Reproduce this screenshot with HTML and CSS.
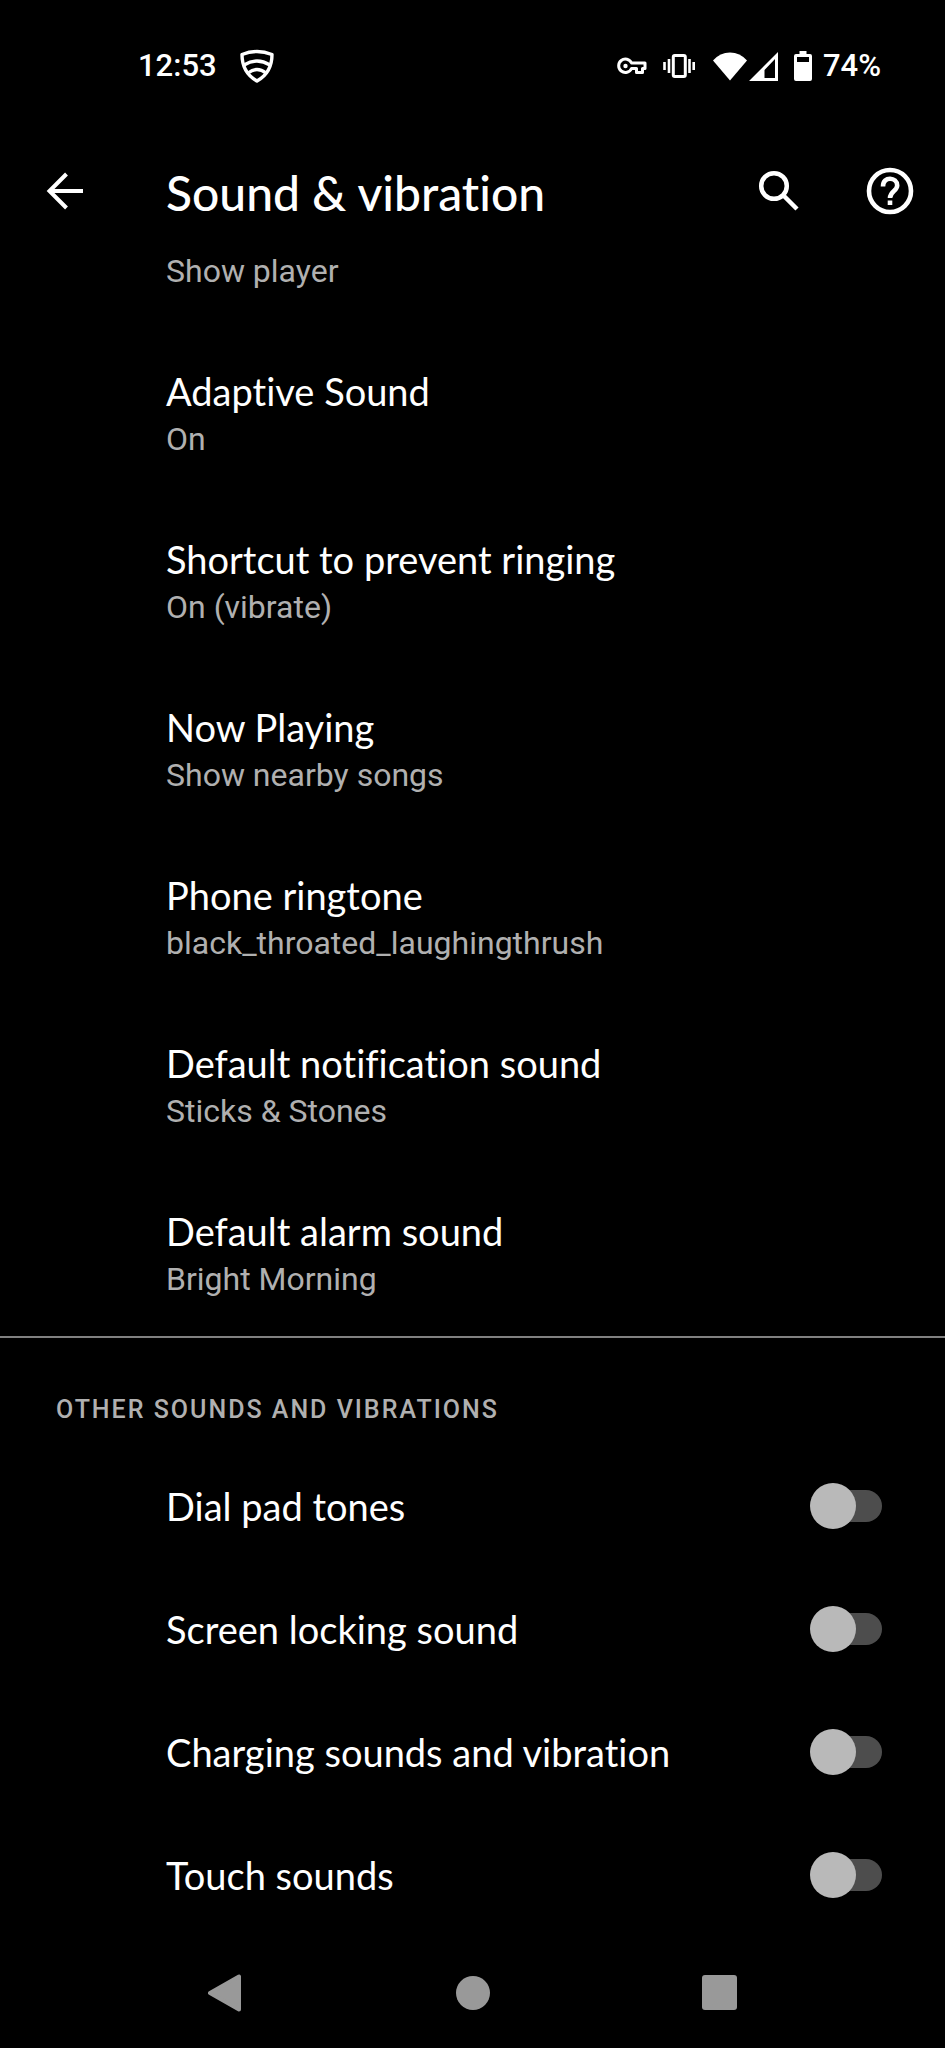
FILE: index.html
```
<!DOCTYPE html>
<html lang="en">
<head>
    <meta charset="UTF-8">
    <meta name="viewport" content="width=device-width, initial-scale=1.0">
    <title>Sound &amp; vibration</title>
    <link rel="stylesheet" href="styles.css">
</head>
<body>
    <div class="status-bar">
        <span class="clock">12:53</span>
        <svg class="shield" width="34" height="34" viewBox="0 0 34 34" fill="none" stroke="currentColor" stroke-width="3.400" stroke-linejoin="round">
            <path d="M2 5.500Q17 -.5 32 5.500C32 18 26 27 17 32C8 27 2 18 2 5.500Z"/>
            <path d="M4 16Q17 8 30 16M8 24Q17 17 26 24"/>
        </svg>
        <div class="status-icons">
            <svg class="key" width="30" height="18" viewBox="0 0 30 18" fill="none" stroke="currentColor" stroke-width="3">
                <path d="M14.500 6H28V11.500H25.500V15.500H19.500V11.500H14.500A6.700 6.700 0 1 1 14.500 6Z" stroke-linejoin="round"/>
                <circle cx="8.500" cy="9" r="2.200" fill="currentColor" stroke="none"/>
            </svg>
            <svg class="vibrate" width="32" height="24" viewBox="0 0 32 24" fill="none" stroke="currentColor" stroke-width="2.600">
                <rect x="10.300" y="1.500" width="12" height="21" rx="1.500" stroke-width="3"/>
                <path d="M6 5V19M1.500 8V16M26.500 5V19M30.700 8V16"/>
            </svg>
            <svg class="wifi" width="34" height="29" viewBox="0 0 34 29" fill="currentColor">
                <path d="M17 28.500L0 8.500Q7 .5 17 .5T34 8.500Z"/>
            </svg>
            <svg class="signal" width="29" height="29" viewBox="0 0 29 29" fill="currentColor">
                <path fill-rule="evenodd" d="M29 0V29H0ZM26 7L15.500 18V26H26Z"/>
            </svg>
            <svg class="battery" width="18" height="30" viewBox="0 0 18 30" fill="currentColor">
                <path fill-rule="evenodd" d="M5.500 0H12.500V3H16Q18 3 18 5V28Q18 30 16 30H2Q0 30 0 28V5Q0 3 2 3H5.500ZM3 6V11H15V6Z"/>
            </svg>
            <span class="percent">74%</span>
        </div>
    </div>

    <header class="app-bar">
        <button class="icon-btn" aria-label="Back">
            <svg width="38" height="38" viewBox="0 0 38 38" fill="none" stroke="currentColor" stroke-width="4">
                <path d="M37 19H4M20.500 2L3.500 19L20.500 36"/>
            </svg>
        </button>
        <h1>Sound &amp; vibration</h1>
        <button class="icon-btn search-btn" aria-label="Search">
            <svg width="42" height="42" viewBox="0 0 42 42" fill="none" stroke="currentColor" stroke-width="4.500">
                <circle cx="16" cy="16" r="12.800"/>
                <path d="M25 25L39 39"/>
            </svg>
        </button>
        <button class="icon-btn" aria-label="Help">
            <svg width="48" height="48" viewBox="0 0 48 48" fill="none" stroke="currentColor" stroke-width="4.600">
                <circle cx="24" cy="24" r="21"/>
                <path d="M17 19.500C17 8.500 31.200 10 31.200 18.500C31.200 24 24 24 24 31"/>
                <path d="M24 33.500V38"/>
            </svg>
        </button>
    </header>

    <main>
        <a class="row partial" href="#"><span class="summary">Show player</span></a>
        <a class="row" href="#">
            <span class="title">Adaptive Sound</span>
            <span class="summary">On</span>
        </a>
        <a class="row" href="#">
            <span class="title">Shortcut to prevent ringing</span>
            <span class="summary">On (vibrate)</span>
        </a>
        <a class="row" href="#">
            <span class="title">Now Playing</span>
            <span class="summary">Show nearby songs</span>
        </a>
        <a class="row" href="#">
            <span class="title">Phone ringtone</span>
            <span class="summary">black_throated_laughingthrush</span>
        </a>
        <a class="row" href="#">
            <span class="title">Default notification sound</span>
            <span class="summary">Sticks &amp; Stones</span>
        </a>
        <a class="row" href="#">
            <span class="title">Default alarm sound</span>
            <span class="summary">Bright Morning</span>
        </a>

        <section class="other">
            <h2>OTHER SOUNDS AND VIBRATIONS</h2>
            <label class="switch-row">
                <span class="title">Dial pad tones</span>
                <input type="checkbox" role="switch" class="switch">
            </label>
            <label class="switch-row">
                <span class="title">Screen locking sound</span>
                <input type="checkbox" role="switch" class="switch">
            </label>
            <label class="switch-row">
                <span class="title">Charging sounds and vibration</span>
                <input type="checkbox" role="switch" class="switch">
            </label>
            <label class="switch-row">
                <span class="title">Touch sounds</span>
                <input type="checkbox" role="switch" class="switch">
            </label>
        </section>
    </main>

    <nav class="nav-bar">
        <button class="nav-btn" aria-label="Back">
            <svg width="36" height="38" viewBox="0 0 36 38" fill="currentColor" stroke="currentColor" stroke-width="4" stroke-linejoin="round">
                <path d="M2 19L31 2.500V35.500Z"/>
            </svg>
        </button>
        <button class="nav-btn" aria-label="Home">
            <svg width="36" height="38" viewBox="0 0 36 38" fill="currentColor">
                <circle cx="18" cy="19" r="17"/>
            </svg>
        </button>
        <button class="nav-btn" aria-label="Overview">
            <svg width="36" height="38" viewBox="0 0 36 38" fill="currentColor">
                <rect x="0" y="1" width="35" height="35" rx="3"/>
            </svg>
        </button>
    </nav>
</body>
</html>
```
FILE: styles.css
```
* {
    box-sizing: border-box;
}

body {
    margin: 0;
    min-height: 100vh;
    display: flex;
    flex-direction: column;
    background: #000;
    color: #fff;
    font-family: 'Google Sans', 'Lato', sans-serif;
    font-variant-ligatures: none;
}

svg {
    display: block;
    flex: none;
}

button {
    padding: 0;
    border: none;
    background: none;
    color: inherit;
    cursor: pointer;
}

/* Status bar */
.status-bar {
    display: flex;
    align-items: center;
    height: 132px;
    padding: 0 64px 0 138px;
    font-family: 'Google Sans', 'Roboto', sans-serif;
    font-size: 31px;
    line-height: 40px;
    font-weight: 500;
}

.shield {
    margin-left: 23px;
}

.status-icons {
    display: flex;
    align-items: center;
    margin-left: auto;
}

.vibrate,
.battery {
    margin-left: 16px;
}

.wifi {
    margin-left: 18px;
}

.signal {
    margin-left: 2px;
}

.percent {
    margin-left: 11px;
}

/* App bar */
.app-bar {
    display: flex;
    align-items: center;
    height: 118px;
    padding: 0 31px 0 46px;
}

.app-bar h1 {
    flex: 1;
    margin: 0 0 0 82px;
    padding-top: 4px;
    font-size: 48px;
    line-height: 56px;
    font-weight: 500;
}

.search-btn {
    margin-right: 66px;
}

/* Settings list */
main {
    flex: 1;
}

.row {
    display: flex;
    flex-direction: column;
    gap: 6px;
    padding: 42px 64px 36px 166px;
    color: inherit;
    text-decoration: none;
}

.row.partial {
    padding-top: 0;
}

.title {
    font-size: 38px;
    line-height: 42px;
}

.summary {
    font-family: 'Roboto', sans-serif;
    font-size: 32px;
    line-height: 42px;
    color: #b0b0b0;
}

.other {
    border-top: 2px solid #808080;
}

.other h2 {
    margin: 0;
    padding: 56px 56px 18px;
    font-family: 'Roboto', sans-serif;
    font-size: 25px;
    line-height: 32px;
    font-weight: 500;
    letter-spacing: 2px;
    color: #b0b0b0;
}

.switch-row {
    display: flex;
    align-items: center;
    justify-content: space-between;
    min-height: 123px;
    padding: 0 63px 0 166px;
    cursor: pointer;
}

.switch {
    appearance: none;
    display: flex;
    align-items: center;
    width: 66px;
    height: 32px;
    margin: 0;
    border-radius: 16px;
    background: #4d4d4d;
    cursor: pointer;
}

.switch::before {
    content: '';
    width: 46px;
    height: 46px;
    margin-left: -6px;
    border-radius: 50%;
    background: #b9b9b9;
}

.switch:checked::before {
    margin-left: 26px;
    background: #fff;
}

/* Navigation bar */
.nav-bar {
    display: flex;
    align-items: center;
    justify-content: center;
    gap: 211px;
    height: 110px;
    color: #999;
}
```
